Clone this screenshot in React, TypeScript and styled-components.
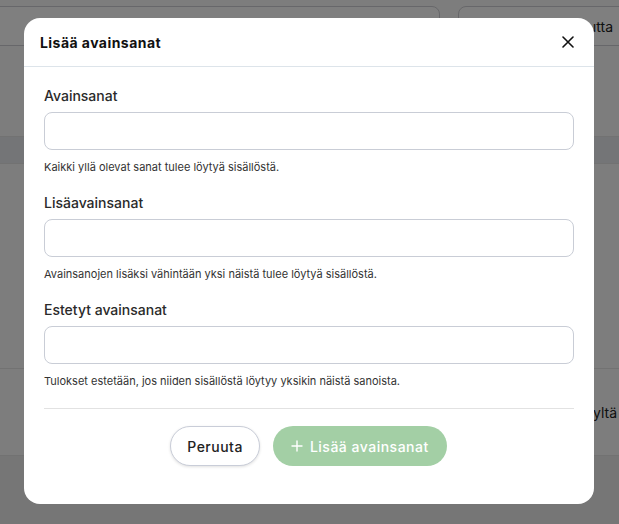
import React from 'react';
import styled, { createGlobalStyle } from 'styled-components';

const GlobalStyle = createGlobalStyle`
  html, body {
    margin: 0;
    padding: 0;
    background: #ffffff;
    font-family: Inter, 'Liberation Sans', sans-serif;
  }
  * {
    box-sizing: border-box;
  }
`;

const Page = styled.div`
  position: relative;
  width: 619px;
  height: 524px;
  overflow: hidden;
  background: #fbfbfb;
`;

const Toolbar = styled.div`
  display: flex;
  gap: 18px;
  padding: 6px 0 0 0;
  height: 46px;
  border-bottom: 1px solid #e6e6e6;
  margin-left: -20px;
`;

const FakeInput = styled.div<{ $width: number }>`
  flex-shrink: 0;
  width: ${(p) => p.$width}px;
  height: 40px;
  border: 1px solid #cfcfd4;
  border-radius: 8px;
  background: #fff;
  display: flex;
  align-items: center;
  justify-content: flex-end;
  padding-right: 44px;
  font-size: 14px;
  color: #222;
  white-space: nowrap;
  overflow: hidden;
`;

const BgRow = styled.div<{ $height: number; $tone?: string }>`
  height: ${(p) => p.$height}px;
  background: ${(p) => p.$tone || '#fbfbfb'};
  border-bottom: 1px solid #e4e4e4;
  display: flex;
  align-items: center;
  justify-content: flex-end;
  padding-right: 2px;
  font-size: 14px;
  color: #222;
  white-space: nowrap;
  overflow: hidden;
`;

const Overlay = styled.div`
  position: absolute;
  inset: 0;
  background: rgba(0, 0, 0, 0.5);
  padding: 18px 0 0 24px;
`;

const Modal = styled.div`
  width: 570px;
  height: 486px;
  background: #fff;
  border-radius: 16px;
  display: flex;
  flex-direction: column;
`;

const Header = styled.div`
  height: 49px;
  display: flex;
  align-items: center;
  justify-content: space-between;
  padding: 0 19px 0 16px;
  border-bottom: 1px solid #dde4ea;
`;

const Title = styled.h2`
  margin: 0;
  font-size: 14px;
  font-weight: 700;
  color: #111;
  letter-spacing: 0.45px;
`;

const CloseButton = styled.button`
  border: none;
  background: none;
  padding: 0;
  width: 14px;
  height: 14px;
  display: flex;
  align-items: center;
  justify-content: center;
  cursor: pointer;
`;

const Body = styled.div`
  padding: 20px 20px 0 20px;
  display: flex;
  flex-direction: column;
`;

const Field = styled.div`
  display: flex;
  flex-direction: column;
  height: 107px;

  &:last-of-type {
    height: 101px;
  }
`;

const Label = styled.label`
  font-size: 14px;
  font-weight: 500;
  color: #2a2a2a;
  line-height: 18px;
  margin-bottom: 7px;
`;

const Input = styled.input`
  height: 38px;
  width: 100%;
  border: 1px solid #c9cdd6;
  border-radius: 8px;
  padding: 0 12px;
  font-family: inherit;
  font-size: 14px;
  outline: none;
`;

const Help = styled.div`
  margin-top: 10px;
  font-size: 11px;
  color: #333;
  line-height: 14px;
`;

const Divider = styled.div`
  height: 1px;
  background: #e2e2e2;
`;

const Footer = styled.div`
  display: flex;
  justify-content: center;
  gap: 13px;
  padding: 17px 1px 0 0;
`;

const PillButton = styled.button<{ $primary?: boolean }>`
  height: 40px;
  border-radius: 20px;
  padding: 0 ${(p) => (p.$primary ? '18px' : '16px')};
  font-family: Inter, 'Liberation Sans', sans-serif;
  font-size: 14px;
  font-weight: 500;
  letter-spacing: 0.5px;
  display: flex;
  align-items: center;
  gap: 7px;
  border: ${(p) => (p.$primary ? 'none' : '1px solid #c9cdd8')};
  background: ${(p) => (p.$primary ? '#a3cfa5' : '#fff')};
  color: ${(p) => (p.$primary ? '#fff' : '#222')};
  box-shadow: ${(p) => (p.$primary ? 'none' : '0 1px 3px rgba(0,0,0,0.12)')};
`;

const fields = [
  { label: 'Avainsanat', help: 'Kaikki yllä olevat sanat tulee löytyä sisällöstä.' },
  {
    label: 'Lisäavainsanat',
    help: 'Avainsanojen lisäksi vähintään yksi näistä tulee löytyä sisällöstä.',
  },
  {
    label: 'Estetyt avainsanat',
    help: 'Tulokset estetään, jos niiden sisällöstä löytyy yksikin näistä sanoista.',
  },
];

const App: React.FC = () => {
  return (
    <Page>
      <GlobalStyle />
      <Toolbar>
        <FakeInput $width={460} />
        <FakeInput $width={200}>Lisää uutta</FakeInput>
      </Toolbar>
      <BgRow $height={91} />
      <BgRow $height={27} $tone="#e9ebee" />
      <BgRow $height={205} />
      <BgRow $height={87}>muokattu yltä</BgRow>
      <BgRow $height={70} $tone="#ececec" />

      <Overlay>
        <Modal>
          <Header>
            <Title>Lisää avainsanat</Title>
            <CloseButton aria-label="Sulje">
              <svg width="12" height="12" viewBox="0 0 12 12">
                <path d="M1 1L11 11M11 1L1 11" stroke="#111" strokeWidth="1.6" strokeLinecap="round" />
              </svg>
            </CloseButton>
          </Header>
          <Body>
            {fields.map((f) => (
              <Field key={f.label}>
                <Label>{f.label}</Label>
                <Input />
                <Help>{f.help}</Help>
              </Field>
            ))}
            <Divider />
            <Footer>
              <PillButton>Peruuta</PillButton>
              <PillButton $primary>
                <svg width="12" height="12" viewBox="0 0 12 12">
                  <path d="M6 1V11M1 6H11" stroke="#fff" strokeWidth="1.4" strokeLinecap="round" />
                </svg>
                Lisää avainsanat
              </PillButton>
            </Footer>
          </Body>
        </Modal>
      </Overlay>
    </Page>
  );
};

export default App;
